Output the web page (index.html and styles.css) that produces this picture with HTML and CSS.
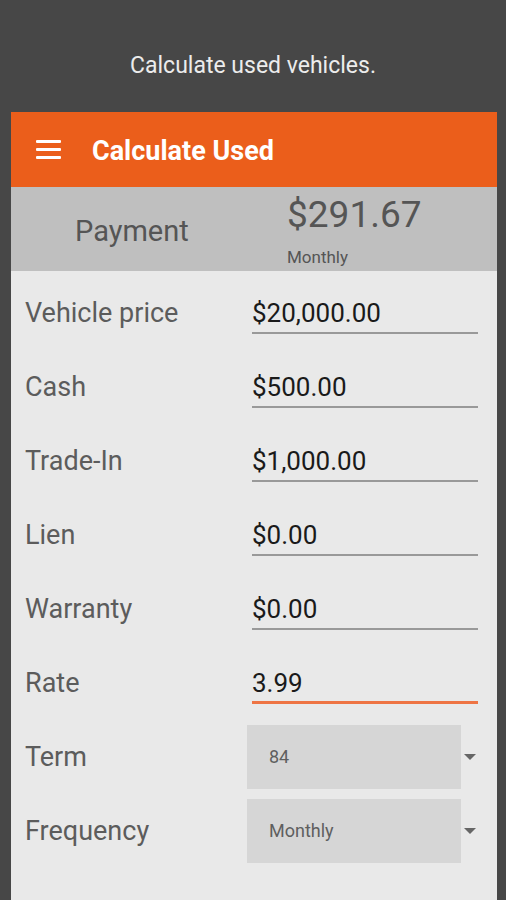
FILE: index.html
```html
<!DOCTYPE html>
<html lang="en">

<head>
    <meta charset="UTF-8">
    <meta name="viewport" content="width=device-width, initial-scale=1.0">
    <title>Calculate Used</title>
    <link rel="stylesheet" href="styles.css">
</head>

<body>
    <div class="caption">Calculate used vehicles.</div>

    <div class="phone">
        <!-- 顶部橙色栏 -->
        <div class="appbar">
            <span class="menu-icon"><i></i><i></i><i></i></span>
            <span class="appbar-title">Calculate Used</span>
        </div>

        <!-- 月供 -->
        <div class="payment">
            <div class="payment-label">Payment</div>
            <div class="payment-value">
                <div class="amount">$291.67</div>
                <div class="period">Monthly</div>
            </div>
        </div>

        <!-- 表单 -->
        <div class="form">
            <div class="row">
                <label>Vehicle price</label>
                <div class="field">$20,000.00</div>
            </div>
            <div class="row">
                <label>Cash</label>
                <div class="field">$500.00</div>
            </div>
            <div class="row">
                <label>Trade-In</label>
                <div class="field">$1,000.00</div>
            </div>
            <div class="row">
                <label>Lien</label>
                <div class="field">$0.00</div>
            </div>
            <div class="row">
                <label>Warranty</label>
                <div class="field">$0.00</div>
            </div>
            <div class="row">
                <label>Rate</label>
                <div class="field focused">3.99</div>
            </div>
            <div class="row">
                <label>Term</label>
                <div class="spinner">
                    <div class="spinner-box">84</div>
                    <span class="caret"></span>
                </div>
            </div>
            <div class="row">
                <label>Frequency</label>
                <div class="spinner">
                    <div class="spinner-box">Monthly</div>
                    <span class="caret"></span>
                </div>
            </div>
        </div>
    </div>
</body>

</html>
```

FILE: styles.css
```css
* {
    padding: 0;
    margin: 0;
    box-sizing: border-box;
}

body {
    background: #474747;
    font-family: Roboto, "Liberation Sans", sans-serif;
    overflow: hidden;
}

.caption {
    height: 112px;
    padding-top: 51px;
    text-align: center;
    font-size: 23px;
    line-height: 30px;
    color: #ececec;
}

.phone {
    width: 486px;
    height: 800px;
    margin-left: 11px;
    background: #e9e9e9;
}

.appbar {
    display: flex;
    align-items: center;
    height: 75px;
    padding-left: 25px;
    background: #eb5e1b;
}

.menu-icon {
    display: flex;
    flex-direction: column;
    gap: 5px;
    width: 25px;
    margin-right: 31px;
}

.menu-icon i {
    display: block;
    height: 3px;
    border-radius: 1px;
    background: #fff;
}

.appbar-title {
    padding-top: 3px;
    font-size: 27px;
    font-weight: 700;
    color: #fff;
}

.payment {
    display: flex;
    height: 84px;
    background: #bfbfbf;
    color: #555;
}

.payment-label {
    width: 276px;
    padding-left: 64px;
    padding-top: 26px;
    font-size: 29px;
    line-height: 36px;
}

.payment-value {
    padding-top: 7px;
}

.amount {
    font-size: 37px;
    line-height: 42px;
}

.period {
    margin-top: 11px;
    font-size: 17px;
    line-height: 20px;
}

.form {
    padding: 5px 19px 0 14px;
}

.row {
    display: flex;
    align-items: center;
    height: 74px;
}

.row label {
    width: 227px;
    font-size: 27px;
    line-height: 30px;
    color: #5c5c5c;
}

.field {
    flex: 1;
    padding-top: 5px;
    padding-bottom: 4px;
    font-size: 26px;
    line-height: 30px;
    color: #1a1a1a;
    border-bottom: 2px solid #999;
}

.field.focused {
    border-bottom: 3px solid #ee7444;
    padding-bottom: 3px;
}

.spinner {
    display: flex;
    align-items: center;
    flex: 1;
    margin-left: -5px;
}

.spinner-box {
    width: 214px;
    height: 64px;
    padding-left: 22px;
    font-size: 18px;
    line-height: 64px;
    color: #5f5f5f;
    background: #d6d6d6;
}

.caret {
    margin-left: 3px;
    border-left: 6px solid transparent;
    border-right: 6px solid transparent;
    border-top: 6px solid #666;
}
```
